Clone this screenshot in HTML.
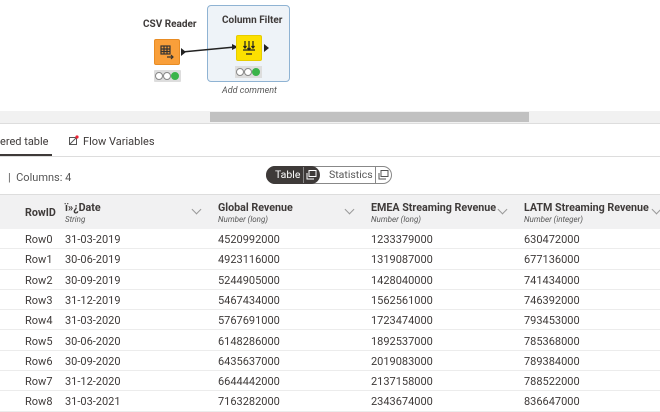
<!DOCTYPE html>
<html><head><meta charset="utf-8"><style>
*{box-sizing:border-box;margin:0;padding:0}
body{width:660px;height:406px;overflow:hidden;background:#fff;font-family:"Roboto","Liberation Sans",sans-serif;color:#3e3a39;position:relative}
.a{position:absolute;white-space:nowrap}
.b{font-weight:bold}
.hdr .t{font-weight:bold;font-size:10.7px;color:#3e3a39}
.hdr .s{font-style:italic;font-size:8px;color:#555;margin-top:1px}
.row{position:absolute;left:0;width:660px;height:20.3px;border-bottom:1px solid #ececec;font-size:11px}
.row span{position:absolute;top:4px}
.chev{position:absolute;width:7px;height:7px;border-right:1px solid #999;border-bottom:1px solid #999;transform:rotate(45deg)}
.light{position:absolute;width:8px;height:8px;border-radius:50%;border:1px solid #888;background:#fff;top:2px}
</style></head><body>
<div class="a b" style="left:143px;top:19px;font-size:10px;">CSV Reader</div>
<div class="a" style="left:207px;top:5px;width:83px;height:77px;border:1.5px solid #8fb3d3;border-radius:4px;background:#eef3f8"></div>
<div class="a b" style="left:222px;top:15px;font-size:10px;">Column Filter</div>
<div class="a" style="left:154px;top:39px;width:26px;height:26px;background:#f99f3a;border:1px solid #e88c24;border-radius:2px"></div>
<svg class="a" style="left:154px;top:39px" width="40" height="28" viewBox="0 0 40 28">
<rect x="7" y="7" width="9" height="8" fill="none" stroke="#333" stroke-width="1.2"/><path d="M7 10h9M7 12.5h9M10 7v8M13 7v8M13 18h6M17 16l2 2-2 2" stroke="#333" stroke-width="1.2" fill="none"/>
<path d="M27 9l5 4-5 4z" fill="#222"/></svg>
<svg class="a" style="left:180px;top:40px" width="60" height="20"><path d="M2 12 L55 7" stroke="#222" stroke-width="1.5"/><path d="M52 4l6 3-6 3z" fill="#222"/></svg>
<div class="a" style="left:236px;top:35px;width:26px;height:26px;background:#fce000;border:1px solid #e6cc00;border-radius:2px"></div>
<svg class="a" style="left:236px;top:35px" width="40" height="28"><path d="M9 6v7M13 6v9M17 6v7M7.5 11l1.5 2 1.5-2M11.5 13l1.5 2 1.5-2M15.5 11l1.5 2 1.5-2M7 15h12M10 19h6" stroke="#222" stroke-width="1.2" fill="none"/><path d="M28 9l5 4-5 4z" fill="#222"/></svg>
<div class="a" style="left:154px;top:70px;width:27px;height:12px;background:#ddd;border-radius:1px"></div>
<div class="light" style="left:155px;top:72px"></div><div class="light" style="left:163px;top:72px"></div><div class="light" style="left:171px;top:72px;background:#3bb44a;border-color:#3bb44a"></div>
<div class="a" style="left:235px;top:66px;width:27px;height:12px;background:#ddd"></div>
<div class="light" style="left:236px;top:68px"></div><div class="light" style="left:244px;top:68px"></div><div class="light" style="left:252px;top:68px;background:#3bb44a;border-color:#3bb44a"></div>
<div class="a" style="left:222px;top:86px;font-size:9px;font-style:italic;color:#555">Add comment</div>
<div class="a" style="left:0;top:111px;width:660px;height:13px;background:#f1f1f1;border-bottom:1px solid #ddd"></div>
<div class="a" style="left:210px;top:112px;width:319px;height:10px;background:#c1c1c1"></div>
<div class="a" style="left:0;top:135px;font-size:11px">ered table</div>
<div class="a" style="left:0;top:154px;width:52px;height:3px;background:#3e3a39"></div>
<div class="a" style="left:0;top:156px;width:660px;height:1px;background:#ddd"></div>
<svg class="a" style="left:68px;top:135px" width="12" height="12"><rect x="1.5" y="2.5" width="7" height="7" fill="none" stroke="#555"/><path d="M2 9l6-6" stroke="#555"/><circle cx="9" cy="2" r="1.6" fill="#e23"/></svg>
<div class="a" style="left:83px;top:135px;font-size:11px">Flow Variables</div>
<div class="a" style="left:8px;top:171px;font-size:11px;color:#555">|&nbsp; Columns: 4</div>
<div class="a" style="left:266px;top:166px;width:126px;height:18px;border:1px solid #888;border-radius:9px"></div>
<div class="a" style="left:266px;top:166px;width:54px;height:18px;background:#3e3a39;border-radius:9px"></div>
<div class="a" style="left:275px;top:168px;font-size:10.5px;color:#fff">Table</div>
<div class="a" style="left:303px;top:167px;width:1px;height:16px;background:#888"></div>
<svg class="a" style="left:306px;top:170px" width="11" height="10"><rect x="3" y="0.5" width="7" height="6" fill="none" stroke="#fff"/><path d="M1 3v6h7" fill="none" stroke="#fff"/></svg>
<div class="a" style="left:329px;top:168px;font-size:10.5px;color:#555">Statistics</div>
<div class="a" style="left:375px;top:167px;width:1px;height:16px;background:#888"></div>
<svg class="a" style="left:378px;top:170px" width="11" height="10"><rect x="3" y="0.5" width="7" height="6" fill="none" stroke="#555"/><path d="M1 3v6h7" fill="none" stroke="#555"/></svg>
<div class="a" style="left:0;top:194px;width:660px;height:35px;background:#f1f1f2;border-top:1px solid #ddd"></div>
<div class="a hdr" style="left:25px;top:206px"><div class="t">RowID</div></div>
<div class="a hdr" style="left:65px;top:201px"><div class="t">ï»¿Date</div><div class="s">String</div></div>
<div class="a hdr" style="left:218px;top:201px"><div class="t">Global Revenue</div><div class="s">Number (long)</div></div>
<div class="a hdr" style="left:371px;top:201px"><div class="t">EMEA Streaming Revenue</div><div class="s">Number (long)</div></div>
<div class="a hdr" style="left:524px;top:201px"><div class="t">LATM Streaming Revenue</div><div class="s">Number (integer)</div></div>
<div class="chev" style="left:193px;top:206px"></div>
<div class="chev" style="left:346px;top:206px"></div>
<div class="chev" style="left:499px;top:206px"></div>
<div class="chev" style="left:653px;top:206px"></div>
<div class="row" style="top:229px"><span style="left:25px">Row0</span><span style="left:65px">31-03-2019</span><span style="left:218px">4520992000</span><span style="left:371px">1233379000</span><span style="left:524px">630472000</span></div>
<div class="row" style="top:249.3px"><span style="left:25px">Row1</span><span style="left:65px">30-06-2019</span><span style="left:218px">4923116000</span><span style="left:371px">1319087000</span><span style="left:524px">677136000</span></div>
<div class="row" style="top:269.6px"><span style="left:25px">Row2</span><span style="left:65px">30-09-2019</span><span style="left:218px">5244905000</span><span style="left:371px">1428040000</span><span style="left:524px">741434000</span></div>
<div class="row" style="top:289.9px"><span style="left:25px">Row3</span><span style="left:65px">31-12-2019</span><span style="left:218px">5467434000</span><span style="left:371px">1562561000</span><span style="left:524px">746392000</span></div>
<div class="row" style="top:310.2px"><span style="left:25px">Row4</span><span style="left:65px">31-03-2020</span><span style="left:218px">5767691000</span><span style="left:371px">1723474000</span><span style="left:524px">793453000</span></div>
<div class="row" style="top:330.5px"><span style="left:25px">Row5</span><span style="left:65px">30-06-2020</span><span style="left:218px">6148286000</span><span style="left:371px">1892537000</span><span style="left:524px">785368000</span></div>
<div class="row" style="top:350.8px"><span style="left:25px">Row6</span><span style="left:65px">30-09-2020</span><span style="left:218px">6435637000</span><span style="left:371px">2019083000</span><span style="left:524px">789384000</span></div>
<div class="row" style="top:371.1px"><span style="left:25px">Row7</span><span style="left:65px">31-12-2020</span><span style="left:218px">6644442000</span><span style="left:371px">2137158000</span><span style="left:524px">788522000</span></div>
<div class="row" style="top:391.4px"><span style="left:25px">Row8</span><span style="left:65px">31-03-2021</span><span style="left:218px">7163282000</span><span style="left:371px">2343674000</span><span style="left:524px">836647000</span></div>
</body></html>
